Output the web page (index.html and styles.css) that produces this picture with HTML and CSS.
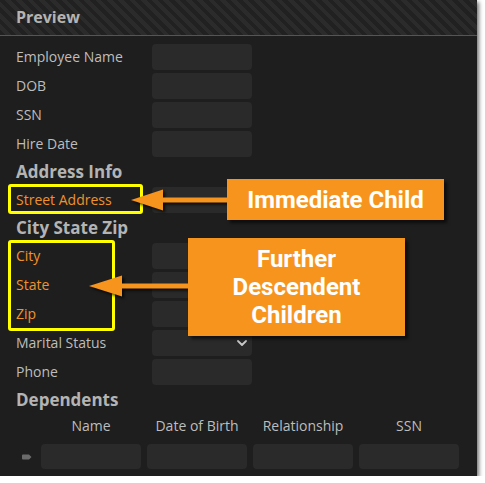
FILE: index.html
```html
<!DOCTYPE html>
<html>
<head>
<meta charset="utf-8">
<link rel="stylesheet" href="styles.css">
</head>
<body>
<div class="panel">
  <div class="header">Preview</div>
  <div class="body">
    <div class="row"><span class="label">Employee Name</span><div class="input"></div></div>
    <div class="row"><span class="label">DOB</span><div class="input"></div></div>
    <div class="row"><span class="label">SSN</span><div class="input"></div></div>
    <div class="row"><span class="label">Hire Date</span><div class="input"></div></div>
    <div class="section">Address Info</div>
    <div class="row"><span class="label hl">Street Address</span><div class="input"></div></div>
    <div class="section">City State Zip</div>
    <div class="row"><span class="label hl">City</span><div class="input"></div></div>
    <div class="row"><span class="label hl">State</span><div class="input"></div></div>
    <div class="row"><span class="label hl">Zip</span><div class="input"></div></div>
    <div class="row"><span class="label">Marital Status</span>
      <div class="input select">
        <svg class="chev" width="10" height="6" viewBox="0 0 10 6"><polyline points="1,1 5,5 9,1" fill="none" stroke="#c8c8c8" stroke-width="1.8" stroke-linecap="round" stroke-linejoin="round"/></svg>
      </div>
    </div>
    <div class="row"><span class="label">Phone</span><div class="input"></div></div>
    <div class="section">Dependents</div>
    <div class="table">
      <div></div>
      <div class="th">Name</div>
      <div class="th">Date of Birth</div>
      <div class="th">Relationship</div>
      <div class="th">SSN</div>
      <div class="rowmark"><svg width="10" height="6" viewBox="0 0 10 6"><path d="M1 0.5 H7 L9.5 3 L7 5.5 H1 A1 1 0 0 1 0 4.5 V1.5 A1 1 0 0 1 1 0.5 Z" fill="#6a6a6a"/></svg></div>
      <div class="input cell"></div>
      <div class="input cell"></div>
      <div class="input cell"></div>
      <div class="input cell"></div>
    </div>
  </div>

  <div class="hlbox box1"></div>
  <div class="hlbox box2"></div>
  <svg class="arrows" width="477" height="476" viewBox="0 0 477 476">
    <g class="arr">
      <rect x="160" y="197.5" width="68" height="5" fill="#f7941d"/>
      <polygon points="131,200 163,189.5 163,210.5" fill="#f7941d"/>
      <rect x="120" y="283.5" width="69" height="5" fill="#f7941d"/>
      <polygon points="89,286 122,275.5 122,296.5" fill="#f7941d"/>
    </g>
  </svg>
  <div class="callout c1">Immediate Child</div>
  <div class="callout c2">Further<br>Descendent<br>Children</div>
</div>
</body>
</html>
```
FILE: styles.css
```css
html, body {
  margin: 0;
  padding: 0;
  background: #ffffff;
}
.panel {
  position: relative;
  width: 477px;
  height: 476px;
  background: #1e1e1e;
  box-shadow: 2px 2px 4px rgba(0,0,0,0.55);
  font-family: "Open Sans", "DejaVu Sans", sans-serif;
}
.header {
  height: 35px;
  border-bottom: 1px solid #555555;
  background: repeating-linear-gradient(45deg, #212121 0px, #212121 4px, #2b2b2b 4px, #2b2b2b 8px);
  color: #b4b4b4;
  font-weight: 700;
  font-size: 16px;
  line-height: 35px;
  padding-left: 16px;
}
.body {
  padding: 8px 0 0 16px;
  display: flex;
  flex-direction: column;
}
.row {
  display: flex;
  align-items: center;
  height: 26px;
  margin-bottom: 3px;
}
.label {
  width: 136px;
  font-size: 14px;
  color: #bdbdbd;
  padding-bottom: 2px;
}
.label.hl {
  color: #f0922b;
}
.input {
  width: 100px;
  height: 26px;
  background: #2a2a2a;
  border-radius: 4px;
  box-sizing: border-box;
}
.select {
  display: flex;
  align-items: center;
  justify-content: flex-end;
  padding-right: 5px;
}
.section {
  height: 24px;
  line-height: 24px;
  margin-bottom: 3px;
  font-size: 17px;
  font-weight: 700;
  color: #b4b4b4;
}
.table {
  display: grid;
  grid-template-columns: 19px repeat(4, 100px);
  column-gap: 6px;
  row-gap: 7px;
}
.th {
  text-align: center;
  font-size: 14px;
  color: #bdbdbd;
  line-height: 22px;
}
.rowmark {
  display: flex;
  align-items: center;
  padding-left: 6px;
}
.cell {
  height: 25px;
}
.hlbox {
  position: absolute;
  border: 3px solid #ffff00;
  border-radius: 3px;
  box-sizing: border-box;
}
.box1 { left: 8px; top: 184px; width: 135px; height: 30px; }
.box2 { left: 8px; top: 240px; width: 107px; height: 91px; }
.arrows {
  position: absolute;
  left: 0;
  top: 0;
}
.arr {
  filter: drop-shadow(2px 2px 1.5px rgba(0,0,0,0.75));
}
.callout {
  position: absolute;
  background: #f7941d;
  color: #ffffff;
  font-family: Roboto, "Liberation Sans", sans-serif;
  font-weight: 700;
  font-size: 24px;
  text-align: center;
  box-shadow: 3px 3px 3px rgba(0,0,0,0.6);
  display: flex;
  align-items: center;
  justify-content: center;
}
.c1 { left: 227px; top: 179px; width: 217px; height: 41px; }
.c2 { left: 188px; top: 238px; width: 217px; height: 98px; line-height: 28px; }
```
